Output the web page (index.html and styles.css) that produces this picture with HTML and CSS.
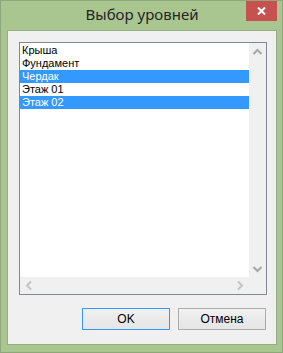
FILE: index.html
```html
<!DOCTYPE html>
<html lang="ru">
<head>
    <meta charset="UTF-8">
    <title>Выбор уровней</title>
    <link rel="stylesheet" href="styles.css">
</head>
<body>
    <div class="window">
        <div class="titlebar">
            <span class="title">Выбор уровней</span>
            <button class="close">
                <svg width="9" height="8" viewBox="0 0 9 8"><path d="M1 0.5 L8 7.5 M8 0.5 L1 7.5" stroke="#fff" stroke-width="2"/></svg>
            </button>
        </div>
        <div class="client">
            <div class="listbox">
                <div class="list-main">
                    <div class="items">
                        <div class="item">Крыша</div>
                        <div class="item">Фундамент</div>
                        <div class="item selected">Чердак</div>
                        <div class="item">Этаж 01</div>
                        <div class="item selected">Этаж 02</div>
                    </div>
                    <div class="vscroll">
                        <svg width="17" height="17" viewBox="0 0 17 17"><path d="M4.5 11 L8.5 7 L12.5 11" fill="none" stroke="#a6a6a6" stroke-width="2"/></svg>
                        <svg width="17" height="17" viewBox="0 0 17 17"><path d="M4.5 7 L8.5 11 L12.5 7" fill="none" stroke="#a6a6a6" stroke-width="2"/></svg>
                    </div>
                </div>
                <div class="hscroll">
                    <div class="hbar">
                        <svg width="17" height="17" viewBox="0 0 17 17"><path d="M10 4.5 L6 8.5 L10 12.5" fill="none" stroke="#c4c4c4" stroke-width="2"/></svg>
                        <svg width="17" height="17" viewBox="0 0 17 17"><path d="M7 4.5 L11 8.5 L7 12.5" fill="none" stroke="#c4c4c4" stroke-width="2"/></svg>
                    </div>
                    <div class="corner"></div>
                </div>
            </div>
            <div class="buttons">
                <button class="btn default">OK</button>
                <button class="btn">Отмена</button>
            </div>
        </div>
    </div>
</body>
</html>
```

FILE: styles.css
```css
body {
    margin: 0;
    background-color: #ffffff;
}

.window {
    width: 283px;
    height: 353px;
    box-sizing: border-box;
    background-color: #a9c590;
    border: 1px solid #8ea879;
    padding: 0 5px 7px 6px;
    display: flex;
    flex-direction: column;
}

.titlebar {
    height: 29px;
    display: flex;
    justify-content: center;
    position: relative;
}

.title {
    font-family: "Noto Sans", "Open Sans", sans-serif;
    font-size: 15px;
    color: #262626;
    line-height: 20px;
    margin-top: 3px;
}

.close {
    position: absolute;
    top: 0;
    right: 0;
    width: 31px;
    height: 20px;
    border: none;
    padding: 0;
    background-color: #c75050;
    display: flex;
    align-items: center;
    justify-content: center;
}

.client {
    flex: 1;
    background-color: #f0f0f0;
    border: 1px solid #93ae7f;
    padding: 11px 8px 0 11px;
    display: flex;
    flex-direction: column;
}

.listbox {
    width: 248px;
    height: 253px;
    box-sizing: border-box;
    border: 1px solid #828790;
    background-color: #ffffff;
    display: flex;
    flex-direction: column;
}

.list-main {
    flex: 1;
    display: flex;
}

.items {
    flex: 1;
    padding-top: 1px;
}

.item {
    height: 13px;
    line-height: 13px;
    padding-left: 2px;
    font-family: "Liberation Sans", Arial, sans-serif;
    font-size: 11px;
    color: #000000;
}

.item.selected {
    background-color: #3399ff;
    color: #ffffff;
}

.vscroll {
    width: 17px;
    background-color: #f0f0f0;
    display: flex;
    flex-direction: column;
    justify-content: space-between;
}

.hscroll {
    height: 17px;
    display: flex;
}

.hbar {
    flex: 1;
    background-color: #f0f0f0;
    display: flex;
    justify-content: space-between;
    padding: 0 1px;
}

.corner {
    width: 17px;
    background-color: #f0f0f0;
}

.buttons {
    display: flex;
    justify-content: flex-end;
    gap: 8px;
    margin-top: 13px;
    margin-right: 2px;
}

.btn {
    width: 88px;
    height: 22px;
    border: 1px solid #acacac;
    background: linear-gradient(#f0f0f0, #e5e5e5);
    font-family: "Liberation Sans", Arial, sans-serif;
    font-size: 12px;
    color: #000000;
    padding: 0;
}

.btn.default {
    border-color: #3399ff;
}
```
